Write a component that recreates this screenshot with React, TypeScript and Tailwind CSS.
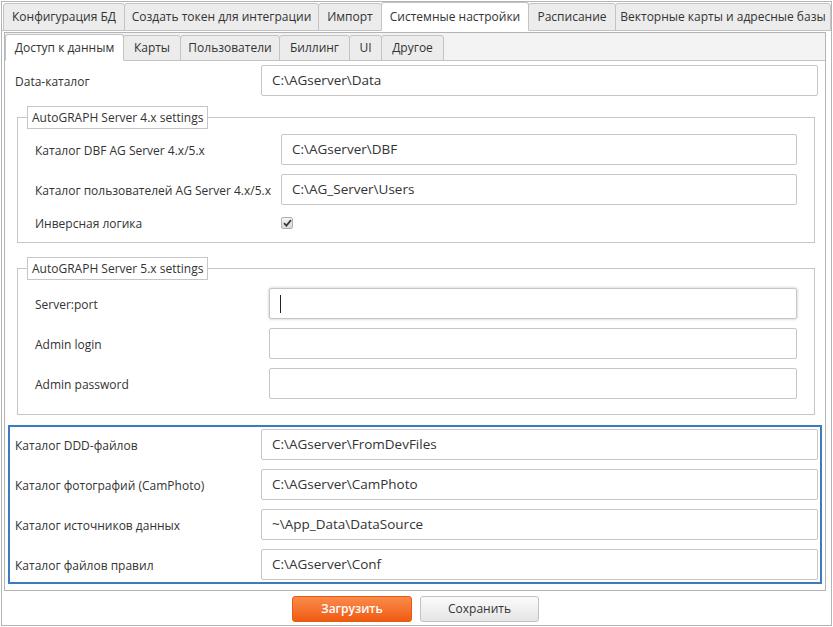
import React from "react";

const outerTabs = [
  { label: "Конфигурация БД", w: "w-[122px]" },
  { label: "Создать токен для интеграции", w: "w-[195px]" },
  { label: "Импорт", w: "w-[64px]" },
  { label: "Системные настройки", w: "w-[148px]", active: true },
  { label: "Расписание", w: "w-[88px]" },
  { label: "Векторные карты и адресные базы", w: "w-[216px]" },
];

const innerTabs = [
  { label: "Доступ к данным", w: "w-[119px]", active: true },
  { label: "Карты", w: "w-[58px]" },
  { label: "Пользователи", w: "w-[100px]" },
  { label: "Биллинг", w: "w-[71px]" },
  { label: "UI", w: "w-[33px]" },
  { label: "Другое", w: "w-[63px]" },
];

function Field({ value, focused, w }: { value?: string; focused?: boolean; w: string }) {
  return (
    <div
      className={`${w} h-[31px] shrink-0 rounded-[2px] border border-[#c6c6c6] bg-white pl-[10px] flex items-center text-[13.5px] text-[#333] ${
        focused ? "shadow-[0_0_3px_rgba(0,0,0,0.25)]" : ""
      }`}
    >
      {focused ? <span className="h-[18px] w-[1px] bg-[#222]" /> : value}
    </div>
  );
}

function Row({ label, labelW, children }: { label: string; labelW: string; children: React.ReactNode }) {
  return (
    <div className="flex items-center">
      <div className={`${labelW} shrink-0 text-[12px] text-[#333] pt-[2px]`}>{label}</div>
      {children}
    </div>
  );
}

function Legend({ children }: { children: React.ReactNode }) {
  return (
    <legend className="-ml-[8px] border border-[#c6c6c6] px-[4px] h-[23px] leading-[21px] text-[12px] text-[#333]">
      {children}
    </legend>
  );
}

export default function App() {
  return (
    <div className="w-[833px] h-[627px] bg-white font-['Open_Sans',sans-serif] overflow-hidden">
      <div className="ml-[1px] mt-[1px] w-[831px] h-[625px] border border-[#b4b4b4] flex flex-col">
        <div className="flex h-[29px] items-end pl-[1px]">
          {outerTabs.map((t, i) => (
            <div
              key={t.label}
              className={`${t.w} ${i > 0 ? "-ml-[1px]" : ""} h-[28px] rounded-t-[3px] border border-[#c3c3c3] flex items-center justify-center text-[12px] text-[#333] ${
                t.active ? "bg-white border-b-white relative z-10 h-[29px]" : "bg-[#ececec]"
              }`}
            >
              {t.label}
            </div>
          ))}
        </div>
        <div className="flex-1 border-t border-[#c3c3c3] flex flex-col -mt-[1px] pl-[2px] pr-[4px]">
          <div className="w-[822px] mt-[1px] h-[559px] border border-[#b4b4b4] flex flex-col">
            <div className="h-[28px] bg-[#f3f3f3] flex items-end">
              {innerTabs.map((t, i) => (
                <div
                  key={t.label}
                  className={`${t.w} ${i > 0 ? "-ml-[1px]" : ""} h-[26px] rounded-t-[3px] border border-[#c3c3c3] flex items-center justify-center text-[12px] text-[#333] ${
                    t.active ? "bg-white border-b-white relative z-10 h-[27px]" : "bg-[#ececec]"
                  }`}
                >
                  {t.label}
                </div>
              ))}
            </div>
            <div className="flex-1 border-t border-[#c3c3c3] -mt-[1px] pl-[10px] pr-[5px] pt-[4px] flex flex-col">
              <Row label="Data-каталог" labelW="w-[246px]">
                <Field w="w-[557px]" value="C:\AGserver\Data" />
              </Row>

              <fieldset className="ml-[2px] w-[798px] mt-[10px] border border-[#c6c6c6] px-[17px] pb-[10px]">
                <Legend>AutoGRAPH Server 4.x settings</Legend>
                <div className="mt-[5px] flex flex-col gap-[9px]">
                  <Row label="Каталог DBF AG Server 4.x/5.x" labelW="w-[246px]">
                    <Field w="w-[516px]" value="C:\AGserver\DBF" />
                  </Row>
                  <Row label="Каталог пользователей AG Server 4.x/5.x" labelW="w-[246px]">
                    <Field w="w-[516px]" value="C:\AG_Server\Users" />
                  </Row>
                </div>
                <div className="flex items-center h-[18px] mt-[9px]">
                  <div className="w-[246px] shrink-0 text-[12px] text-[#333] pt-[1px]">Инверсная логика</div>
                  <div className="w-[12px] h-[12px] rounded-[2px] border border-[#b0b0b0] bg-gradient-to-b from-[#f4f4f4] to-[#d8d8d8] flex items-center justify-center">
                    <svg width="9" height="8" viewBox="0 0 9 8">
                      <path d="M1 4.2 L3.4 6.6 L8 1.2" stroke="#3a3a3a" strokeWidth="1.8" fill="none" />
                    </svg>
                  </div>
                </div>
              </fieldset>

              <fieldset className="ml-[2px] w-[798px] mt-[14px] border border-[#c6c6c6] px-[17px] pb-[15px]">
                <Legend>AutoGRAPH Server 5.x settings</Legend>
                <div className="mt-[8px] flex flex-col gap-[9px]">
                  <Row label="Server:port" labelW="w-[234px]">
                    <Field w="w-[528px]" focused />
                  </Row>
                  <Row label="Admin login" labelW="w-[234px]">
                    <Field w="w-[528px]" />
                  </Row>
                  <Row label="Admin password" labelW="w-[234px]">
                    <Field w="w-[528px]" />
                  </Row>
                </div>
              </fieldset>

              <div className="-ml-[7px] w-[814px] mt-[10px] border-2 border-[#3b7bbf] pl-[5px] pr-[2px] pt-[2px] pb-[2px] flex flex-col gap-[9px]">
                <Row label="Каталог DDD-файлов" labelW="w-[246px]">
                  <Field w="w-[557px]" value="C:\AGserver\FromDevFiles" />
                </Row>
                <Row label="Каталог фотографий (CamPhoto)" labelW="w-[246px]">
                  <Field w="w-[557px]" value="C:\AGserver\CamPhoto" />
                </Row>
                <Row label="Каталог источников данных" labelW="w-[246px]">
                  <Field w="w-[557px]" value="~\App_Data\DataSource" />
                </Row>
                <Row label="Каталог файлов правил" labelW="w-[246px]">
                  <Field w="w-[557px]" value="C:\AGserver\Conf" />
                </Row>
              </div>
            </div>
          </div>
          <div className="flex justify-center gap-[8px] mt-[5px]">
            <button className="w-[120px] h-[26px] rounded-[3px] border border-[#e35a12] bg-gradient-to-b from-[#fb8a48] to-[#ef5a0c] text-white text-[12px] font-semibold">
              Загрузить
            </button>
            <button className="w-[119px] h-[26px] rounded-[3px] border border-[#c2c2c2] bg-gradient-to-b from-[#fbfbfb] to-[#e5e5e5] text-[#333] text-[12px]">
              Сохранить
            </button>
          </div>
        </div>
      </div>
    </div>
  );
}
